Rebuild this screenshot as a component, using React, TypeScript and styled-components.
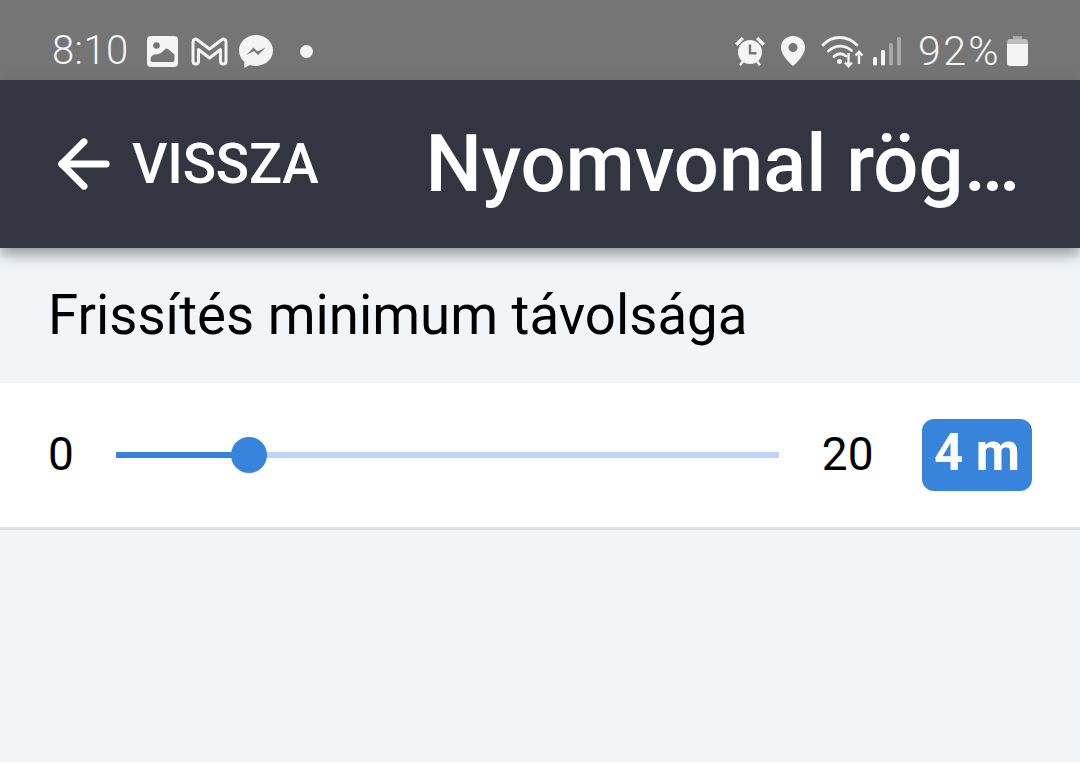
import React from "react"
import styled, { createGlobalStyle } from "styled-components"
import { ArrowLeft } from "lucide-react"

const GlobalStyle = createGlobalStyle`
	html, body {
		margin: 0;
		padding: 0;
		background: #f1f5f8;
		font-family: Roboto, "Liberation Sans", sans-serif;
	}
`

const SLIDER_PERCENT = 20.1

export default function App() {
	return (
		<Page>
			<GlobalStyle />
			<StatusBar>
				<StatusGroup>
					<Clock>8:10</Clock>
					<IconSlot $gap={18}>
						<GalleryIcon />
					</IconSlot>
					<IconSlot $gap={13}>
						<MailIcon />
					</IconSlot>
					<IconSlot $gap={11}>
						<MessengerIcon />
					</IconSlot>
					<Dot />
				</StatusGroup>
				<StatusGroup>
					<AlarmIcon />
					<IconSlot $gap={16}>
						<PinIcon />
					</IconSlot>
					<IconSlot $gap={16}>
						<WifiIcon />
					</IconSlot>
					<IconSlot $gap={8}>
						<SignalIcon />
					</IconSlot>
					<Percent>92%</Percent>
					<IconSlot $gap={6}>
						<BatteryIcon />
					</IconSlot>
				</StatusGroup>
			</StatusBar>
			<NavBar>
				<BackButton>
					<ArrowLeft size={76} strokeWidth={2.2} />
					<BackLabel>VISSZA</BackLabel>
				</BackButton>
				<Title>Nyomvonal rög…</Title>
			</NavBar>
			<SectionLabel>Frissítés minimum távolsága</SectionLabel>
			<SliderRow>
				<Bound>0</Bound>
				<Slider>
					<TrackFill style={{ width: `${SLIDER_PERCENT}%` }} />
					<Thumb style={{ left: `${SLIDER_PERCENT}%` }} />
				</Slider>
				<Bound>20</Bound>
				<ValueBadge>4 m</ValueBadge>
			</SliderRow>
		</Page>
	)
}

// icons ------------------------------------------------------------------

function GalleryIcon() {
	return (
		<svg width="31" height="31" viewBox="0 0 31 31" display="block">
			<rect width="31" height="31" rx="4" fill="#f4f4f4" />
			<circle cx="9.5" cy="9.5" r="3.3" fill="#757575" />
			<path d="M3.5 24c0-3 1.500-5 4-5.500 3-.6 4.500-.4 6.500-1.500l5-4.500 2 .5 6.500 5.500v5.500c0 1.200-1 2-2 2H5.500c-1 0-2-.8-2-2z" fill="#757575" />
		</svg>
	)
}

function MailIcon() {
	return (
		<svg width="37" height="29" viewBox="0 0 37 29" fill="none" display="block">
			<path d="M2 5c0-2.400 2.400-3.700 4.200-2.300L18.500 12 30.800 2.700C32.600 1.300 35 2.600 35 5v19c0 1.700-1 3-2.700 3s-2.800-1.300-2.800-3V12.500l-11 8.500-11-8.500V24c0 1.700-1 3-2.800 3S2 25.700 2 24z" stroke="#f4f4f4" strokeWidth="3" strokeLinejoin="round" />
		</svg>
	)
}

function MessengerIcon() {
	return (
		<svg width="34" height="33" viewBox="0 0 34 33" display="block">
			<path d="M17 0C7.500 0 0 6.900 0 15.600c0 4.600 2 8.500 5.300 11.200V33l5.400-3c1.900.6 4 .9 6.300.9 9.500 0 17-6.800 17-15.300S26.500 0 17 0z" fill="#f4f4f4" />
			<path d="M7.500 20l7-7.500 4 4 8-4-7.500 7.500-4-4z" fill="#757575" />
		</svg>
	)
}

function AlarmIcon() {
	return (
		<svg width="30" height="30" viewBox="0 0 30 30" display="block">
			<circle cx="15" cy="16" r="12" fill="#f4f4f4" />
			<path d="M0 7.500L6.500 1l2.500 2L2.500 10zM30 7.500L23.500 1 21 3l6.500 7z" fill="#f4f4f4" />
			<path d="M4 28.500l3-4 2 1.500-3 4zM26 28.500l-3-4-2 1.500 3 4z" fill="#f4f4f4" />
			<path d="M13.800 8.500h2.400v7.500h5.300v2.400h-7.700z" fill="#757575" />
		</svg>
	)
}

function PinIcon() {
	return (
		<svg width="24" height="30" viewBox="0 0 24 30" display="block">
			<path fillRule="evenodd" d="M12 0C5 0 0 5 0 11.500 0 18 6 24.500 12 30c6-5.500 12-12 12-18.500C24 5 19 0 12 0zm0 7a4.500 4.500 0 110 9 4.500 4.500 0 010-9z" fill="#f4f4f4" />
		</svg>
	)
}

function WifiIcon() {
	return (
		<svg width="44" height="33" viewBox="0 0 44 33" fill="none" stroke="#f4f4f4" strokeWidth="2.8" strokeLinecap="round" display="block">
			<path d="M2 10C11 0 26 0 36 10" />
			<path d="M7.500 16c7-6.500 16-6.500 23-.5" />
			<path d="M13 21.500c4-3.500 8-3.500 12-.5" />
			<circle cx="18.5" cy="26.5" r="2.5" fill="#f4f4f4" stroke="none" />
			<path d="M27.500 18v13.500M24 27.500l3.500 3.700 3.500-3.700" strokeWidth="2.4" strokeLinecap="butt" />
			<path d="M38 29V17M34.500 20.500l3.500-3.700 3.500 3.700" strokeWidth="2.4" strokeLinecap="butt" />
		</svg>
	)
}

function SignalIcon() {
	return (
		<svg width="28" height="29" viewBox="0 0 28 29" display="block">
			<rect x="0" y="20" width="4" height="8.5" rx="1.5" fill="#f4f4f4" />
			<rect x="8" y="13" width="4" height="15.5" rx="1.5" fill="#f4f4f4" />
			<rect x="16" y="6" width="4" height="22.5" rx="1.5" fill="#a8a8a8" />
			<rect x="24" y="0" width="4" height="28.5" rx="1.5" fill="#a8a8a8" />
		</svg>
	)
}

function BatteryIcon() {
	return (
		<svg width="21" height="30" viewBox="0 0 21 30" display="block">
			<path d="M6 0h9v3H6z" fill="#a9a9a9" />
			<path d="M3 3h15c1.700 0 3 1.300 3 3v3H0V6c0-1.700 1.300-3 3-3z" fill="#bdbdbd" />
			<path d="M0 8h21v19c0 1.700-1.300 3-3 3H3c-1.700 0-3-1.300-3-3z" fill="#f4f4f4" />
		</svg>
	)
}

// layout -----------------------------------------------------------------

const Page = styled.div`
	min-height: 762px;
	background: #f1f5f8;
	overflow: hidden;
`

const StatusBar = styled.div`
	height: 80px;
	box-sizing: border-box;
	padding: 22px 52px 0 52px;
	display: flex;
	align-items: center;
	justify-content: space-between;
	background: #757575;
	color: #f4f4f4;
`

const StatusGroup = styled.div`
	display: flex;
	align-items: center;
`

const IconSlot = styled.span<{ $gap: number }>`
	display: block;
	margin-left: ${(props) => props.$gap}px;
`

const Clock = styled.span`
	font-size: 40px;
	font-weight: 300;
	line-height: 44px;
	letter-spacing: 0.4px;
`

const Dot = styled.span`
	width: 13px;
	height: 13px;
	margin-left: 27px;
	border-radius: 50%;
	background: #f4f4f4;
`

const Percent = styled.span`
	margin-left: 17px;
	font-size: 41px;
	font-weight: 300;
	line-height: 44px;
	letter-spacing: 2.4px;
`

const NavBar = styled.header`
	position: relative;
	height: 168px;
	box-sizing: border-box;
	padding: 0 60px 0 46px;
	display: flex;
	align-items: center;
	justify-content: space-between;
	background: #333541;
	color: #fff;
	box-shadow: 0 6px 14px rgba(60, 65, 75, 0.55);
`

const BackButton = styled.div`
	display: flex;
	align-items: center;
	gap: 10px;
`

const BackLabel = styled.span`
	font-size: 55px;
	font-weight: 500;
	line-height: 64px;
	letter-spacing: -0.2px;
`

const Title = styled.h1`
	margin: 0;
	font-size: 79.6px;
	font-weight: 500;
	line-height: 92px;
	white-space: nowrap;
`

const SectionLabel = styled.div`
	height: 135px;
	box-sizing: border-box;
	padding: 36px 48px 0;
	font-size: 54.6px;
	line-height: 62px;
	color: #000;
`

const SliderRow = styled.div`
	height: 147px;
	box-sizing: border-box;
	padding: 0 48px;
	display: flex;
	align-items: center;
	background: #fff;
	border-bottom: 3px solid #dfe1e5;
`

const Bound = styled.span`
	margin-bottom: 2px;
	font-size: 46px;
	line-height: 54px;
	color: #000;
`

const Slider = styled.div`
	position: relative;
	flex: none;
	width: 663px;
	height: 6px;
	margin: 0 43px 0 42px;
	background: #bfd3f6;
`

const TrackFill = styled.div`
	height: 100%;
	background: #3884dc;
`

const Thumb = styled.div`
	position: absolute;
	top: 50%;
	width: 36px;
	height: 36px;
	border-radius: 50%;
	background: #3884dc;
	transform: translate(-50%, -50%);
`

const ValueBadge = styled.div`
	margin-left: auto;
	width: 110px;
	height: 72px;
	box-sizing: border-box;
	padding-bottom: 5px;
	border-radius: 12px;
	display: flex;
	align-items: center;
	justify-content: center;
	background: #3884dc;
	color: #fff;
	font-size: 51px;
	font-weight: 700;
`
